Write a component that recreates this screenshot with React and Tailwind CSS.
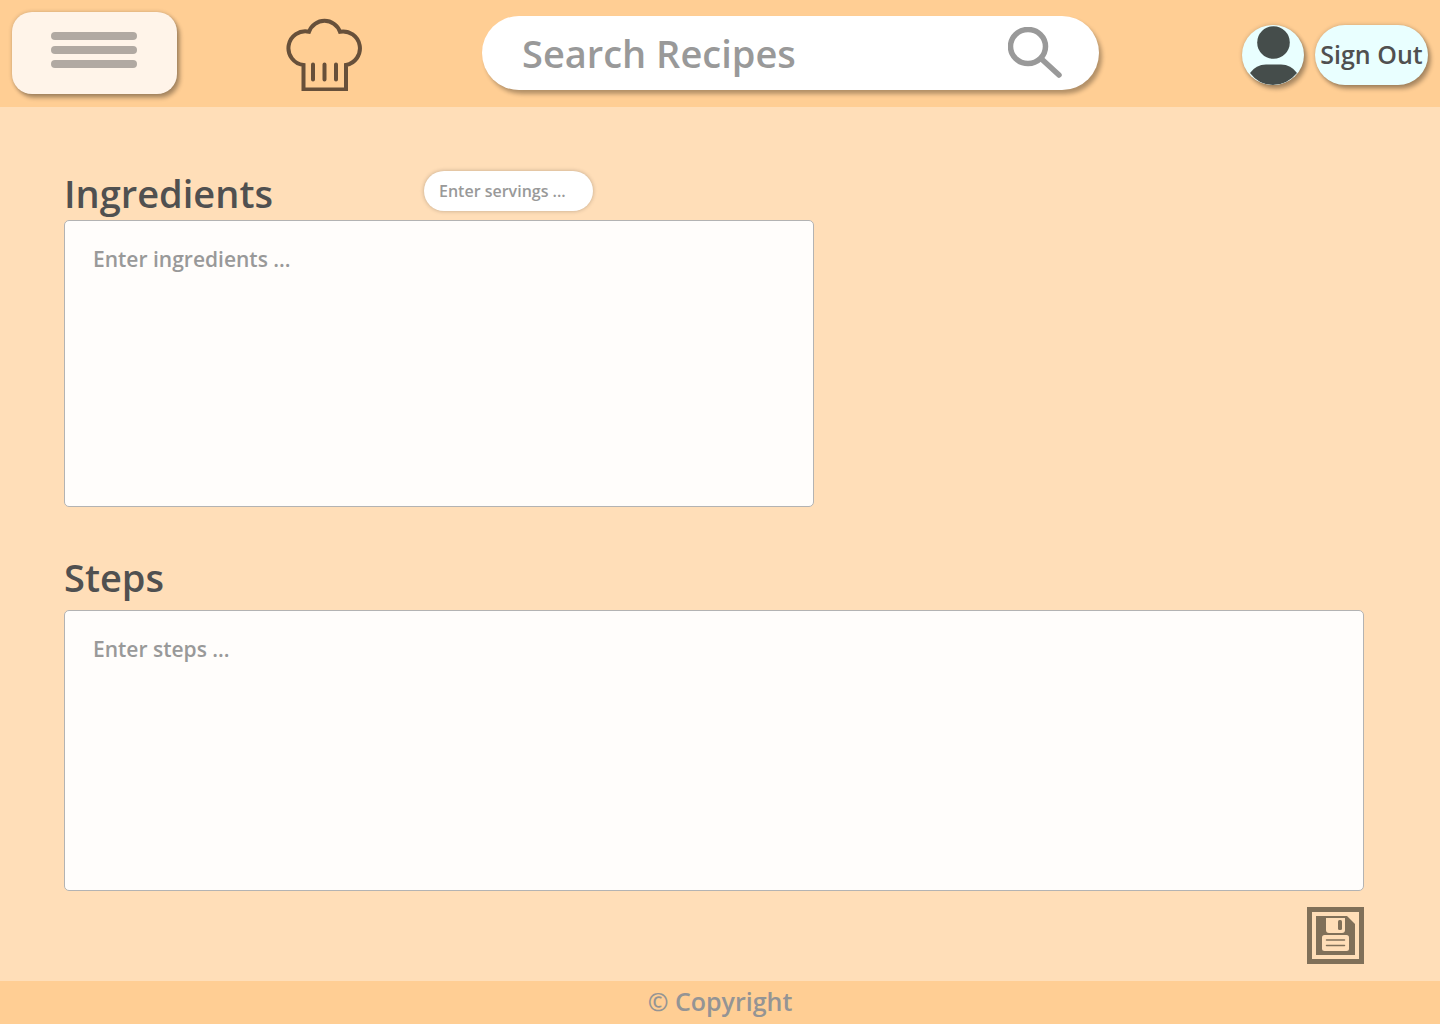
function ChefHat() {
  return (
    <svg viewBox="0 -1 80 76" className="h-[76px] w-20" fill="none" stroke="#67503a" strokeWidth="4" aria-hidden="true">
      <path d="M18.500 73.500V49A16.900 16.900 0 1 1 24 15.700A16.500 16.500 0 0 1 55 15.700A16.900 16.900 0 1 1 61 49V73.500Z" />
      <path d="M28 48.500V63.500M39.500 48.500V63.500M51 48.500V63.500" strokeLinecap="round" />
    </svg>
  );
}

function SearchIcon() {
  return (
    <svg viewBox="0 0 54 52" className="h-13 w-[54px]" fill="none" stroke="#999" strokeWidth="5.500" aria-hidden="true">
      <ellipse cx="20" cy="19.500" rx="17.500" ry="17" />
      <path d="M33 31.500L51 48" strokeLinecap="round" />
    </svg>
  );
}

function Person() {
  return (
    <svg viewBox="0 0 62 60" className="h-full w-full" fill="#454d4b" aria-hidden="true">
      <circle cx="31.500" cy="17.500" r="16.300" />
      <path d="M8 48Q14 39.500 24 39.500H39Q49 39.500 55 48Q45 60 31 60Q17 60 8 48Z" />
    </svg>
  );
}

function SaveIcon() {
  return (
    <svg viewBox="0 0 57 57" className="h-full w-full" aria-hidden="true">
      <path d="M2.500 2.500H54.500V54.500H2.500Z" fill="none" stroke="#807059" strokeWidth="5" />
      <path d="M9 9H40L48 17V48H9Z" fill="#807059" />
      <path d="M19 11H38V23Q38 26 35 26H22Q19 26 19 23Z" fill="#ffdeb8" />
      <rect x="31" y="13" width="4" height="10" rx="1.500" fill="#807059" />
      <rect x="15" y="28" width="27" height="16" rx="2.500" fill="#ffdeb8" />
      <path d="M19.500 33H37.500M19.500 38.500H37.500" stroke="#807059" strokeWidth="1.500" strokeLinecap="round" />
    </svg>
  );
}

export default function App() {
  return (
    <div className="flex min-h-screen flex-col bg-[#ffdeb8] font-['Open_Sans',sans-serif] font-semibold text-[#505050]">
      <header className="flex items-center bg-[#ffce94] px-3 pt-3 pb-[13px]">
        <button
          type="button"
          aria-label="Menu"
          className="flex h-[82px] w-[165px] shrink-0 flex-col items-center justify-center gap-1.5 rounded-[20px] bg-[#fff4e9] pr-0.5 pb-1.5 shadow-[3px_4px_4px_rgba(0,0,0,0.3),0_0_4px_rgba(0,0,0,0.2)]"
        >
          <span className="h-2 w-[86px] rounded-full bg-[#b1a9a2]" />
          <span className="h-2 w-[86px] rounded-full bg-[#b1a9a2]" />
          <span className="h-2 w-[86px] rounded-full bg-[#b1a9a2]" />
        </button>
        <a href="#home" aria-label="Home" className="ml-[108px] shrink-0">
          <ChefHat />
        </a>
        <form role="search" className="mr-[143px] ml-[117px] flex h-[74px] min-w-0 flex-1 items-center rounded-full bg-white pr-[37px] pl-10 shadow-[3px_4px_4px_rgba(0,0,0,0.3)]">
          <input
            type="search"
            aria-label="Search Recipes"
            placeholder="Search Recipes"
            className="min-w-0 flex-1 bg-transparent text-[38px] leading-12 outline-none placeholder:text-[#999]"
          />
          <button type="submit" aria-label="Search" className="shrink-0">
            <SearchIcon />
          </button>
        </form>
        <div className="flex shrink-0 gap-[11px] pt-1">
          <button
            type="button"
            aria-label="Profile"
            className="h-15 w-[62px] overflow-hidden rounded-[50%] bg-[#e9ffff] shadow-[3px_4px_4px_rgba(0,0,0,0.3),0_0_4px_rgba(0,0,0,0.2)]"
          >
            <Person />
          </button>
          <button
            type="button"
            className="h-15 w-[113px] rounded-full bg-[#e9ffff] text-[25px] whitespace-nowrap shadow-[3px_4px_4px_rgba(0,0,0,0.3),0_0_4px_rgba(0,0,0,0.2)]"
          >
            Sign Out
          </button>
        </div>
      </header>

      <main className="flex flex-1 flex-col pt-16 pr-[76px] pb-4 pl-16">
        <div className="flex items-start">
          <label htmlFor="ingredients" className="w-[360px] text-[38px] leading-11">
            Ingredients
          </label>
          <input
            type="text"
            aria-label="Servings"
            placeholder="Enter servings ..."
            className="h-10 w-[169px] rounded-full bg-white px-[15px] text-base shadow-[0_0_4px_rgba(0,0,0,0.25)] outline-none placeholder:text-[#999]"
          />
        </div>
        <textarea
          id="ingredients"
          placeholder="Enter ingredients ..."
          className="mt-[5px] h-[287px] w-[750px] max-w-full resize-none rounded-[5px] border border-[#b3b3b3] bg-[#fffdfb] px-7 py-6 text-[21px] leading-7 outline-none placeholder:text-[#999]"
        />
        <label htmlFor="steps" className="mt-12 text-[38px] leading-11">
          Steps
        </label>
        <textarea
          id="steps"
          placeholder="Enter steps ..."
          className="mt-[11px] h-[281px] w-full resize-none rounded-[5px] border border-[#b3b3b3] bg-[#fffdfb] px-7 py-6 text-[21px] leading-7 outline-none placeholder:text-[#999]"
        />
        <button type="button" aria-label="Save recipe" className="mt-4 size-[57px] self-end">
          <SaveIcon />
        </button>
      </main>

      <footer className="bg-[#ffce94] pt-1 pb-[7px] text-center text-[25px] leading-8 text-[#949494]">© Copyright</footer>
    </div>
  );
}
